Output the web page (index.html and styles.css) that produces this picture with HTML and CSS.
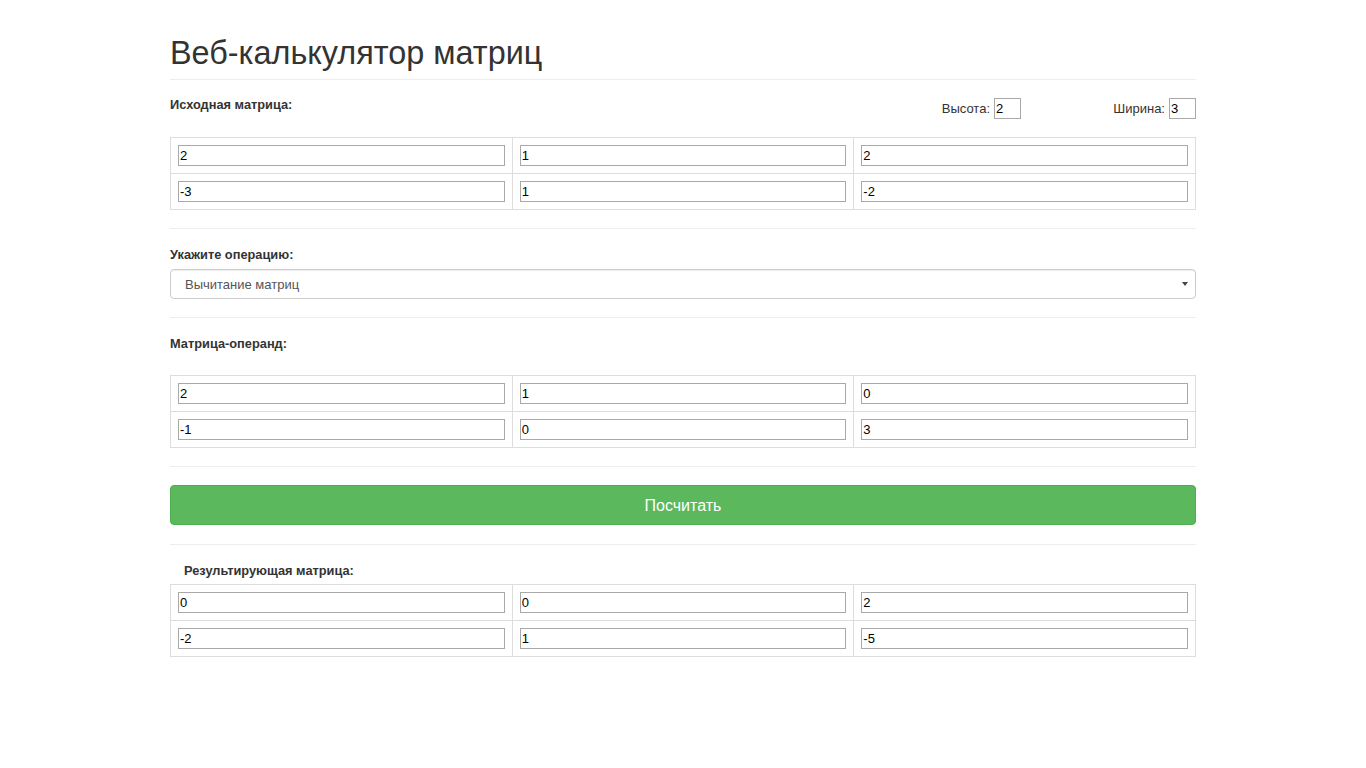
FILE: index.html
```html
<!DOCTYPE html>
<html lang="ru">
<head>
<meta charset="utf-8">
<title>Веб-калькулятор матриц</title>
<link rel="stylesheet" href="styles.css">
</head>
<body>
<div class="container">
  <div class="page-header">
    <h1>Веб-калькулятор матриц</h1>
  </div>

  <div class="size-row">
    <label class="lbl">Исходная матрица:</label>
    <div class="dims">
      <div class="dim">Высота: <input class="dim-input" type="text" value="2"></div>
      <div class="dim">Ширина: <input class="dim-input" type="text" value="3"></div>
    </div>
  </div>

  <table class="matrix first">
    <tr><td><input type="text" value="2"></td><td><input type="text" value="1"></td><td><input type="text" value="2"></td></tr>
    <tr><td><input type="text" value="-3"></td><td><input type="text" value="1"></td><td><input type="text" value="-2"></td></tr>
  </table>

  <hr>

  <label class="lbl block">Укажите операцию:</label>
  <div class="select-wrap">
    <select class="form-select">
      <option>Вычитание матриц</option>
    </select>
  </div>

  <hr>

  <label class="lbl block">Матрица-операнд:</label>
  <table class="matrix operand">
    <tr><td><input type="text" value="2"></td><td><input type="text" value="1"></td><td><input type="text" value="0"></td></tr>
    <tr><td><input type="text" value="-1"></td><td><input type="text" value="0"></td><td><input type="text" value="3"></td></tr>
  </table>

  <hr>

  <button class="btn-success" type="button">Посчитать</button>

  <hr class="after-btn">

  <label class="lbl block result-lbl">Результирующая матрица:</label>
  <table class="matrix result">
    <tr><td><input type="text" value="0"></td><td><input type="text" value="0"></td><td><input type="text" value="2"></td></tr>
    <tr><td><input type="text" value="-2"></td><td><input type="text" value="1"></td><td><input type="text" value="-5"></td></tr>
  </table>
</div>
</body>
</html>
```

FILE: styles.css
```css
* { box-sizing: border-box; }

html, body {
  margin: 0;
  padding: 0;
  background: #fff;
}

body {
  font-family: "Liberation Sans", Arial, sans-serif;
  font-size: 13px;
  color: #333;
}

.container {
  width: 1026px;
  margin: 0 auto;
}

.page-header {
  padding-top: 37px;
  padding-bottom: 9px;
  border-bottom: 1px solid #eee;
}

.page-header h1 {
  margin: 0;
  font-size: 32.4px;
  line-height: 33px;
  font-weight: normal;
  color: #333;
}

.lbl {
  font-weight: bold;
  font-size: 12.8px;
  line-height: 19px;
  color: #333;
}

.lbl.block {
  display: block;
  margin-top: 16px;
}

.size-row {
  display: flex;
  justify-content: space-between;
  margin-top: 15px;
  height: 24px;
}

.dims {
  display: flex;
}

.dim {
  width: 175px;
  display: flex;
  justify-content: flex-end;
  align-items: center;
  gap: 4px;
  height: 21px;
  margin-top: 3px;
  font-size: 13px;
  color: #333;
}

.dim-input {
  width: 27px;
  height: 21px;
  padding: 1px 1px;
  border: 1px solid #a9a9a9;
  font-family: "Liberation Sans", Arial, sans-serif;
  font-size: 13px;
  color: #000;
  margin: 0;
}

.matrix {
  width: 100%;
  border-collapse: collapse;
  table-layout: fixed;
}

.matrix td {
  border: 1px solid #ddd;
  padding: 7px;
}

.matrix input {
  display: block;
  width: 100%;
  height: 21px;
  margin: 0;
  padding: 1px 1px;
  border: 1px solid #a9a9a9;
  font-family: "Liberation Sans", Arial, sans-serif;
  font-size: 13px;
  color: #000;
  background: #fff;
}

.matrix.first { margin-top: 18px; }
.matrix.operand { margin-top: 22px; }
.matrix.result { margin-top: 4px; }

hr {
  margin: 18px 0 0;
  border: 0;
  border-top: 1px solid #eee;
  height: 0;
}

hr.after-btn { margin-top: 19px; }

.select-wrap {
  position: relative;
  margin-top: 5px;
}

.form-select {
  display: block;
  width: 100%;
  height: 30px;
  padding: 0 14px;
  border: 1px solid #ccc;
  border-radius: 4px;
  background: #fff;
  box-shadow: inset 0 1px 1px rgba(0,0,0,0.075);
  font-family: "Liberation Sans", Arial, sans-serif;
  font-size: 13px;
  color: #555;
  -webkit-appearance: none;
  appearance: none;
  margin: 0;
}

.select-wrap::after {
  content: "";
  position: absolute;
  right: 8px;
  top: 13px;
  width: 0;
  height: 0;
  border-left: 3px solid transparent;
  border-right: 3px solid transparent;
  border-top: 4px solid #444;
  pointer-events: none;
}

.btn-success {
  display: block;
  width: 100%;
  height: 40px;
  margin-top: 18px;
  padding: 0;
  border: 1px solid #4cae4c;
  border-radius: 4px;
  background: #5cb85c;
  color: #fff;
  font-family: "Liberation Sans", Arial, sans-serif;
  font-size: 16px;
  line-height: 40px;
  cursor: pointer;
}

.result-lbl {
  padding-left: 14px;
}
```
